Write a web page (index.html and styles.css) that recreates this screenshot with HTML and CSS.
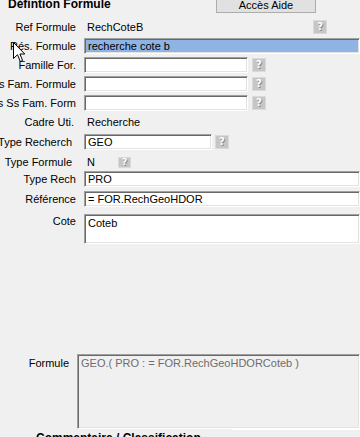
FILE: index.html
```html
<!DOCTYPE html>
<html>
<head>
<meta charset="utf-8">
<link rel="stylesheet" href="styles.css">
</head>
<body>
<div class="page">
  <div class="header">
    <div class="title">Défintion Formule</div>
    <div class="aide-btn">Accès Aide</div>
  </div>

  <div class="form">
    <div class="row r-ref">
      <div class="lbl"><span>Ref Formule</span></div>
      <div class="val">
        <span class="txt">RechCoteB</span>
        <span class="help help-ref">?</span>
      </div>
    </div>

    <div class="row r-res">
      <div class="lbl"><span>Rés. Formule</span></div>
      <div class="val"><div class="field field-full field-sel">recherche cote b</div></div>
    </div>

    <div class="row r-fam">
      <div class="lbl"><span>Famille For.</span></div>
      <div class="val"><div class="field field-mid"></div><span class="help">?</span></div>
    </div>

    <div class="row r-ss">
      <div class="lbl"><span>Ss Fam. Formule</span></div>
      <div class="val"><div class="field field-mid"></div><span class="help">?</span></div>
    </div>

    <div class="row r-ss">
      <div class="lbl"><span>Ss Ss Fam. Form</span></div>
      <div class="val"><div class="field field-mid"></div><span class="help">?</span></div>
    </div>

    <div class="row r-cadre">
      <div class="lbl lbl-cadre"><span>Cadre Uti.</span></div>
      <div class="val"><span class="txt">Recherche</span></div>
    </div>

    <div class="row r-typer">
      <div class="lbl lbl-short"><span>Type Recherch</span></div>
      <div class="val"><div class="field field-small">GEO</div><span class="help help-small">?</span></div>
    </div>

    <div class="row r-typef">
      <div class="lbl lbl-short"><span>Type Formule</span></div>
      <div class="val"><span class="txt txt-n">N</span><span class="help help-tiny">?</span></div>
    </div>

    <div class="row r-rech">
      <div class="lbl"><span>Type Rech</span></div>
      <div class="val"><div class="field field-full">PRO</div></div>
    </div>

    <div class="row r-refe">
      <div class="lbl"><span>Référence</span></div>
      <div class="val"><div class="field field-full">= FOR.RechGeoHDOR</div></div>
    </div>

    <div class="row r-cote">
      <div class="lbl lbl-top"><span>Cote</span></div>
      <div class="val val-top"><div class="field field-full field-area">Coteb</div></div>
    </div>
  </div>

  <div class="formule">
    <div class="formule-lbl">Formule</div>
    <div class="formule-box">GEO.( PRO : = FOR.RechGeoHDORCoteb )</div>
  </div>

  <div class="group">
    <span class="group-title">Commentaire / Classification</span>
  </div>

  <svg class="cursor" width="13" height="21" viewBox="0 0 13 21">
    <path d="M0.5 0.5 L0.5 16.5 L4.5 12.7 L7.3 19.5 L9.6 18.5 L6.9 12 L11.8 12 Z" fill="#fff" stroke="#000" stroke-width="1" stroke-linejoin="miter"/>
  </svg>
</div>
</body>
</html>
```

FILE: styles.css
```css
html, body {
  margin: 0;
  padding: 0;
  background: #f0f0f0;
}

body {
  width: 360px;
  height: 437px;
  overflow: hidden;
  font-family: "Liberation Sans", Arial, sans-serif;
  font-size: 11px;
  color: #000;
}

.page {
  position: relative;
  width: 360px;
  height: 437px;
  overflow: hidden;
}

.header {
  display: flex;
  align-items: flex-start;
  height: 20px;
}

.title {
  margin-left: 8px;
  margin-top: -3px;
  font-weight: bold;
  font-size: 12px;
  line-height: 14px;
  width: 208px;
}

.aide-btn {
  margin-top: -2px;
  width: 98px;
  height: 13px;
  border: 1px solid #adadad;
  background: #e1e1e1;
  text-align: center;
  font-size: 11px;
  line-height: 13px;
}

.form {
  display: flex;
  flex-direction: column;
}

.row {
  display: grid;
  grid-template-columns: 80px 1fr;
  column-gap: 4px;
  height: 16px;
}

.r-ref { height: 14px; }
.r-res { margin-top: 4px; }
.r-fam { margin-top: 3px; }
.r-ss { margin-top: 3px; }
.r-cadre { margin-top: 3px; }
.r-typer { margin-top: 4px; }
.r-typef { margin-top: 4px; }
.r-rech { margin-top: 1px; }
.r-refe { margin-top: 4px; }
.r-cote { margin-top: 7px; height: 30px; }

.lbl {
  display: flex;
  justify-content: flex-end;
  align-items: center;
  padding-right: 4px;
  white-space: nowrap;
  min-width: 0;
}

.lbl-short { padding-right: 8px; }
.lbl-cadre { padding-right: 6px; }
.lbl-top { align-items: flex-start; padding-top: 1px; }

.val {
  display: flex;
  align-items: center;
  min-width: 0;
}

.val-top { align-items: stretch; }

.txt {
  padding-left: 3px;
  white-space: nowrap;
}

.txt-n { width: 31px; }

.field {
  box-sizing: border-box;
  height: 16px;
  background: #fff;
  border-top: 1px solid #a0a0a0;
  border-left: 1px solid #a0a0a0;
  border-right: 1px solid #ffffff;
  border-bottom: 1px solid #ffffff;
  box-shadow: inset 1px 1px 0 #696969, inset -1px -1px 0 #e3e3e3;
  padding: 1px 0 0 3px;
  line-height: 13px;
  white-space: nowrap;
  overflow: hidden;
}

.field-full { width: 280px; }
.field-mid { width: 164px; }
.field-small { width: 128px; }
.field-sel { background: #8fb4e3; }
.field-area { height: 30px; padding-top: 2px; }

.help {
  box-sizing: border-box;
  width: 14px;
  height: 14px;
  margin-left: 4px;
  background: #c6c6c6;
  border: 1px solid #dadada;
  color: #ffffff;
  font-family: "DejaVu Sans", sans-serif;
  font-weight: bold;
  font-size: 10px;
  line-height: 12px;
  text-align: center;
  text-shadow: 1px 1px 0 #8a8a8a;
}

.help-ref { margin-left: 170px; }
.help-small { margin-left: 3px; }
.help-tiny {
  width: 13px;
  height: 11px;
  line-height: 9px;
  font-size: 9px;
  margin-left: 0;
}

.formule {
  margin-top: 110px;
  display: flex;
  align-items: flex-start;
}

.formule-lbl {
  width: 69px;
  text-align: right;
  padding-top: 3px;
  padding-right: 8px;
  white-space: nowrap;
}

.formule-box {
  box-sizing: border-box;
  width: 283px;
  height: 75px;
  background: #f0f0f0;
  border-top: 1px solid #a0a0a0;
  border-left: 1px solid #a0a0a0;
  border-right: 1px solid #ffffff;
  border-bottom: 1px solid #ffffff;
  box-shadow: inset 1px 1px 0 #696969, inset -1px -1px 0 #e3e3e3;
  padding: 2px 0 0 3px;
  color: #6d6d6d;
  line-height: 13px;
  white-space: nowrap;
  overflow: hidden;
}

.group {
  position: relative;
  margin-top: 0;
  height: 12px;
  border-top: 1px solid #ffffff;
  margin-left: 232px;
}

.group-title {
  position: absolute;
  left: -196px;
  top: 1px;
  font-weight: bold;
  font-size: 12px;
  line-height: 14px;
  white-space: nowrap;
}

.cursor {
  position: absolute;
  left: 13px;
  top: 42px;
}
```
